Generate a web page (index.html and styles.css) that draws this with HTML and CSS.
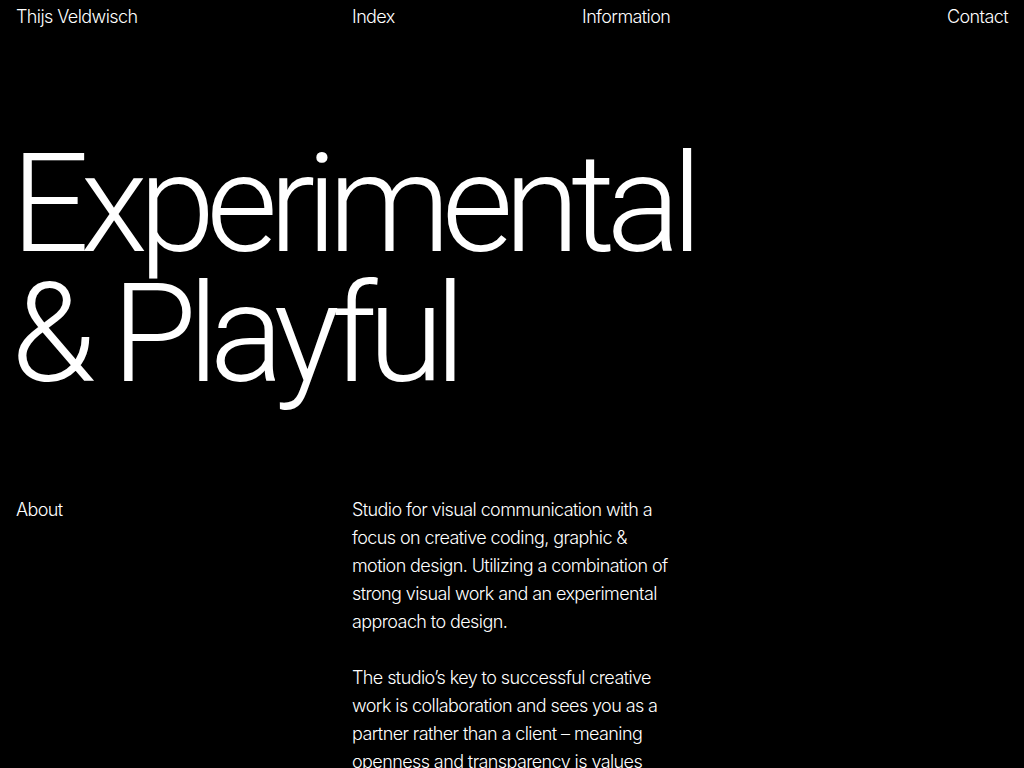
FILE: index.html
```html
<!DOCTYPE html>
<html lang="en">
<head>
<meta charset="utf-8">
<title>Thijs Veldwisch</title>
<link rel="stylesheet" href="styles.css">
</head>
<body>
<header class="nav">
  <a class="nav-item" href="#">Thijs Veldwisch</a>
  <a class="nav-item" href="#">Index</a>
  <a class="nav-item" href="#">Information</a>
  <a class="nav-item nav-right" href="#">Contact</a>
</header>
<main>
  <h1 class="hero">Experimental<br>&amp; Playful</h1>
  <section class="about">
    <h2 class="about-label">About</h2>
    <div class="about-text">
      <p>Studio for visual communication with a focus on creative coding, graphic &amp; motion design. Utilizing a combination of strong visual work and an experimental approach to design.</p>
      <p>The studio’s key to successful creative work is collaboration and sees you as a partner rather than a client – meaning openness and transparency is values highly.</p>
    </div>
  </section>
</main>
</body>
</html>
```

FILE: styles.css
```css
* { box-sizing: border-box; }
html, body { margin: 0; padding: 0; }
body {
  background: #000;
  color: #fff;
  font-family: Inter, "Liberation Sans", sans-serif;
  font-weight: 300;
  font-size: 18px;
  line-height: 28px;
  letter-spacing: -0.033em;
  overflow: hidden;
  height: 768px;
}
a { color: inherit; text-decoration: none; }
.nav {
  display: grid;
  grid-template-columns: 336px 230px 1fr auto;
  padding: 3px 16px 0;
}
.nav-right { text-align: right; }
.hero {
  margin: 0;
  padding: 0 16px 0 11px;
  font-family: Roboto, "Liberation Sans", sans-serif;
  font-weight: 300;
  font-size: 138px;
  line-height: 130px;
  letter-spacing: -0.065em;
  margin-top: 108px;
}
.about {
  display: grid;
  grid-template-columns: 336px 330px;
  padding: 0 16px;
  margin-top: 97px;
}
.about-label {
  margin: 0;
  font: inherit;
}
.about-text p { margin: 0 0 28px; }
```
